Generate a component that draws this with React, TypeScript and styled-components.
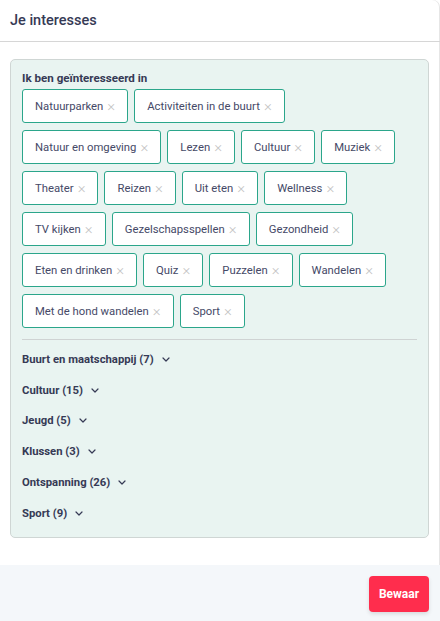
import React from 'react';
import styled, { createGlobalStyle } from 'styled-components';

const GlobalStyle = createGlobalStyle`
  html, body {
    margin: 0;
    padding: 0;
    background: #ffffff;
    font-family: Roboto, "Liberation Sans", Arial, sans-serif;
  }
`;

const INTERESTS = [
  'Natuurparken',
  'Activiteiten in de buurt',
  'Natuur en omgeving',
  'Lezen',
  'Cultuur',
  'Muziek',
  'Theater',
  'Reizen',
  'Uit eten',
  'Wellness',
  'TV kijken',
  'Gezelschapsspellen',
  'Gezondheid',
  'Eten en drinken',
  'Quiz',
  'Puzzelen',
  'Wandelen',
  'Met de hond wandelen',
  'Sport',
];

const CATEGORIES = [
  'Buurt en maatschappij (7)',
  'Cultuur (15)',
  'Jeugd (5)',
  'Klussen (3)',
  'Ontspanning (26)',
  'Sport (9)',
];

const Modal = styled.div`
  width: 440px;
  height: 621px;
  display: flex;
  flex-direction: column;
  background: #fff;
  border-top-right-radius: 7px;
  box-shadow: inset -1px 0 0 #e6e6e6;
  overflow: hidden;
`;

const Header = styled.div`
  height: 41px;
  display: flex;
  align-items: center;
  padding: 0 10px;
  border-bottom: 1px solid #d6d6d6;
`;

const Title = styled.h1`
  margin: 0;
  font-size: 14.5px;
  font-weight: 500;
  color: #363a55;
`;

const Body = styled.div`
  flex: 1;
  padding: 17px 11px 0 10px;
`;

const Panel = styled.div`
  background: #e9f4f1;
  border: 1px solid #cfd6d4;
  border-radius: 5px;
  padding: 10px 11px 8px 11px;
`;

const Label = styled.div`
  font-size: 11.6px;
  font-weight: 700;
  color: #363a55;
  line-height: 16px;
  margin-bottom: 3px;
`;

const ChipList = styled.div`
  display: flex;
  flex-wrap: wrap;
  gap: 7px 6px;
`;

const Chip = styled.div`
  height: 34px;
  box-sizing: border-box;
  display: flex;
  align-items: center;
  gap: 4px;
  padding: 0 12px 0 12px;
  background: #fff;
  border: 1px solid #2ba68b;
  border-radius: 3px;
  font-size: 11.3px;
  color: #454967;
`;

const Remove = styled.span`
  color: #c2c2c2;
  font-size: 15px;
  font-weight: 300;
  line-height: 1;
`;

const Divider = styled.hr`
  margin: 11px 0 4px;
  border: none;
  border-top: 1px solid #cfd3d3;
`;

const Category = styled.div`
  height: 30.8px;
  display: flex;
  align-items: center;
  gap: 8px;
  font-size: 11.3px;
  font-weight: 700;
  color: #363a55;
`;

const Footer = styled.div`
  height: 56px;
  background: #f4f7fa;
  display: flex;
  justify-content: flex-end;
  align-items: flex-start;
  padding: 11px 11px 0;
  box-sizing: border-box;
`;

const SaveButton = styled.button`
  width: 60px;
  height: 36px;
  border: none;
  border-radius: 4px;
  background: #ff2d4d;
  color: #fff;
  font-family: Roboto, "Liberation Sans", Arial, sans-serif;
  font-size: 12px;
  font-weight: 700;
  box-shadow: 0 2px 4px rgba(0, 0, 0, 0.12);
  cursor: pointer;
`;

const Chevron = () => (
  <svg width="8" height="5" viewBox="0 0 8 5" fill="none">
    <path d="M1 1l3 3 3-3" stroke="#363a55" strokeWidth="1.2" strokeLinecap="round" strokeLinejoin="round" />
  </svg>
);

export default function App() {
  return (
    <>
      <GlobalStyle />
      <Modal>
        <Header>
          <Title>Je interesses</Title>
        </Header>
        <Body>
          <Panel>
            <Label>Ik ben geïnteresseerd in</Label>
            <ChipList>
              {INTERESTS.map((item) => (
                <Chip key={item}>
                  {item}
                  <Remove>×</Remove>
                </Chip>
              ))}
            </ChipList>
            <Divider />
            {CATEGORIES.map((cat) => (
              <Category key={cat}>
                {cat}
                <Chevron />
              </Category>
            ))}
          </Panel>
        </Body>
        <Footer>
          <SaveButton>Bewaar</SaveButton>
        </Footer>
      </Modal>
    </>
  );
}
